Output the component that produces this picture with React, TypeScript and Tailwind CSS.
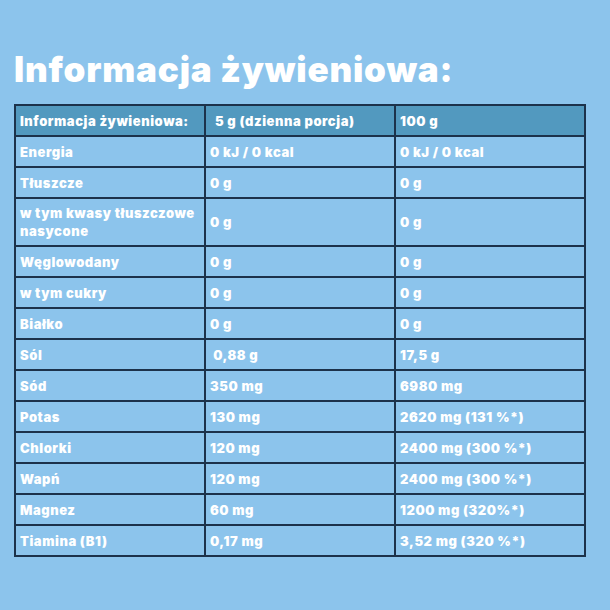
import React from "react";

const rows: [string, string, string][] = [
  ["Energia", "0 kJ / 0 kcal", "0 kJ / 0 kcal"],
  ["Tłuszcze", "0 g", "0 g"],
  ["w tym kwasy tłuszczowe nasycone", "0 g", "0 g"],
  ["Węglowodany", "0 g", "0 g"],
  ["w tym cukry", "0 g", "0 g"],
  ["Białko", "0 g", "0 g"],
  ["Sól", "\u00a00,88 g", "17,5 g"],
  ["Sód", "350 mg", "6980 mg"],
  ["Potas", "130 mg", "2620 mg (131 %*)"],
  ["Chlorki", "120 mg", "2400 mg (300 %*)"],
  ["Wapń", "120 mg", "2400 mg (300 %*)"],
  ["Magnez", "60 mg", "1200 mg (320%*)"],
  ["Tiamina (B1)", "0,17 mg", "3,52 mg (320 %*)"],
];

export default function App() {
  return (
    <div
      className="w-[610px] h-[610px] bg-[#8cc4ec] text-white overflow-hidden"
      style={{ fontFamily: 'Inter, "Liberation Sans", Arial, sans-serif' }}
    >
      <h1 className="pl-[14px] pt-[51px] text-[35px] leading-[36px] font-black tracking-[0.8px]">
        Informacja żywieniowa:
      </h1>
      <table className="ml-[14px] mt-[17px] w-[570px] border-collapse border-2 border-[#1c324b] text-[13px] font-black leading-[18px] tracking-[0.55px] table-fixed">
        <colgroup>
          <col className="w-[190px]" />
          <col className="w-[190px]" />
          <col className="w-[190px]" />
        </colgroup>
        <thead>
          <tr className="bg-[#5299bf] h-[31px]">
            <td className="border-2 border-[#1c324b] px-[4px] py-0">Informacja żywieniowa:</td>
            <td className="border-2 border-[#1c324b] px-[9px] py-0">5 g (dzienna porcja)</td>
            <td className="border-2 border-[#1c324b] px-[4px] py-0">100 g</td>
          </tr>
        </thead>
        <tbody>
          {rows.map((r, i) => (
            <tr key={i} className={i === 2 ? "h-[48px]" : "h-[31px]"}>
              <td className="border-2 border-[#1c324b] px-[4px] py-0">{r[0]}</td>
              <td className="border-2 border-[#1c324b] px-[4px] py-0">{r[1]}</td>
              <td className="border-2 border-[#1c324b] px-[4px] py-0">{r[2]}</td>
            </tr>
          ))}
        </tbody>
      </table>
    </div>
  );
}
